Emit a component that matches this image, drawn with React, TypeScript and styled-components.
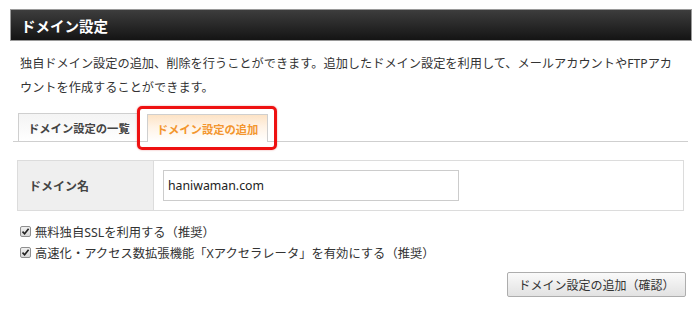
import { createGlobalStyle } from 'styled-components'
import styled from 'styled-components'

const GlobalStyle = createGlobalStyle`
  html, body {
    margin: 0;
    padding: 0;
    background: #fff;
  }
  body {
    font-family: "Noto Sans", "Noto Sans CJK JP", sans-serif;
    color: #333;
  }
`

const FONT = `"Noto Sans", "Noto Sans CJK JP", sans-serif`

export default function App() {
  return (
    <>
      <GlobalStyle />
      <StyledPage>
        <StyledHeader>ドメイン設定</StyledHeader>
        <StyledDescription>
          独自ドメイン設定の追加、削除を行うことができます。追加したドメイン設定を利用して、メールアカウントやFTPアカウントを作成することができます。
        </StyledDescription>

        <StyledTabs>
          <StyledTab>ドメイン設定の一覧</StyledTab>
          <StyledTab active>ドメイン設定の追加</StyledTab>
        </StyledTabs>

        <StyledTable>
          <StyledLabelCell>ドメイン名</StyledLabelCell>
          <StyledValueCell>
            <StyledInput defaultValue="haniwaman.com" />
          </StyledValueCell>
        </StyledTable>

        <StyledOptions>
          <StyledOption>
            <CheckBox />
            無料独自SSLを利用する（推奨）
          </StyledOption>
          <StyledOption>
            <CheckBox />
            高速化・アクセス数拡張機能「Xアクセラレータ」を有効にする（推奨）
          </StyledOption>
        </StyledOptions>

        <StyledFooter>
          <StyledButton>ドメイン設定の追加（確認）</StyledButton>
        </StyledFooter>
      </StyledPage>
    </>
  )
}

const CheckBox = () => (
  <StyledCheck>
    <svg width="9" height="9" viewBox="0 0 9 9">
      <path d="M1.5 4.6 L3.6 6.8 L7.6 1.8" fill="none" stroke="#222" strokeWidth="1.6" />
    </svg>
  </StyledCheck>
)

const StyledPage = styled.div`
  padding: 9px 8px 0 10px;
  display: flex;
  flex-direction: column;
`

const StyledHeader = styled.div`
  height: 30px;
  display: flex;
  align-items: center;
  padding-left: 10px;
  border: 1px solid #9a9a9a;
  background: linear-gradient(#3d3d3d, #141414);
  color: #fff;
  font-family: ${FONT};
  font-weight: 700;
  font-size: 14.5px;
`

const StyledDescription = styled.p`
  margin: 11px 0 0;
  padding: 0 8px 0 10px;
  font-size: 12.2px;
  line-height: 24px;
  color: #333;
`

const StyledTabs = styled.div`
  margin: 13px 4px 0 3px;
  padding-left: 5px;
  display: flex;
  gap: 7px;
  align-items: flex-end;
  border-bottom: 1px solid #cfcfcf;
`

const StyledTab = styled.div<{ active?: boolean }>`
  position: relative;
  height: 27px;
  padding: 0 9px;
  display: flex;
  align-items: center;
  border: 1px solid #cfcfcf;
  border-bottom: none;
  font-size: 11.3px;
  font-weight: 700;
  color: ${(p) => (p.active ? '#f3962e' : '#444')};
  background: ${(p) =>
    p.active
      ? 'linear-gradient(#fde3c6, #fff3e6 45%, #ffffff)'
      : 'linear-gradient(#f4f4f4, #ffffff)'};
  margin-bottom: ${(p) => (p.active ? '-1px' : '0')};

  ${(p) =>
    p.active &&
    `
    &::after {
      content: '';
      position: absolute;
      top: -9px;
      bottom: -8px;
      left: -11px;
      right: -10px;
      border: 3px solid #ee1111;
      border-radius: 5px;
      box-shadow: 0 0 2px rgba(200, 0, 0, 0.4);
    }
  `}
`

const StyledTable = styled.div`
  margin: 18px 8px 0 7px;
  display: grid;
  grid-template-columns: 136px 1fr;
  border: 1px solid #dcdcdc;
  height: 49px;
`

const StyledLabelCell = styled.div`
  background: #efefef;
  border-right: 1px solid #dcdcdc;
  display: flex;
  align-items: center;
  padding-left: 11px;
  font-size: 12px;
  font-weight: 700;
  color: #444;
`

const StyledValueCell = styled.div`
  display: flex;
  align-items: center;
  padding-left: 9px;
`

const StyledInput = styled.input`
  width: 296px;
  height: 31px;
  box-sizing: border-box;
  border: 1px solid #cccccc;
  padding: 0 4px;
  font-family: ${FONT};
  font-size: 12.3px;
  color: #222;
  outline: none;
`

const StyledOptions = styled.div`
  margin-top: 10px;
  padding-left: 10px;
  display: flex;
  flex-direction: column;
`

const StyledOption = styled.label`
  height: 21px;
  display: flex;
  align-items: center;
  gap: 4px;
  font-size: 12.3px;
  color: #333;
`

const StyledCheck = styled.span`
  width: 11px;
  height: 11px;
  box-sizing: border-box;
  border: 1px solid #8f8f8f;
  border-radius: 2px;
  background: linear-gradient(#f0f0f0, #d8d8d8);
  display: flex;
  align-items: center;
  justify-content: center;
`

const StyledFooter = styled.div`
  margin-top: 9px;
  display: flex;
  justify-content: flex-end;
  padding-right: 6px;
`

const StyledButton = styled.button`
  width: 179px;
  height: 25px;
  border: 1px solid #adadad;
  border-radius: 2px;
  background: linear-gradient(#fafafa, #e2e2e2);
  font-family: ${FONT};
  font-size: 12px;
  color: #333;
  padding: 0;
`
